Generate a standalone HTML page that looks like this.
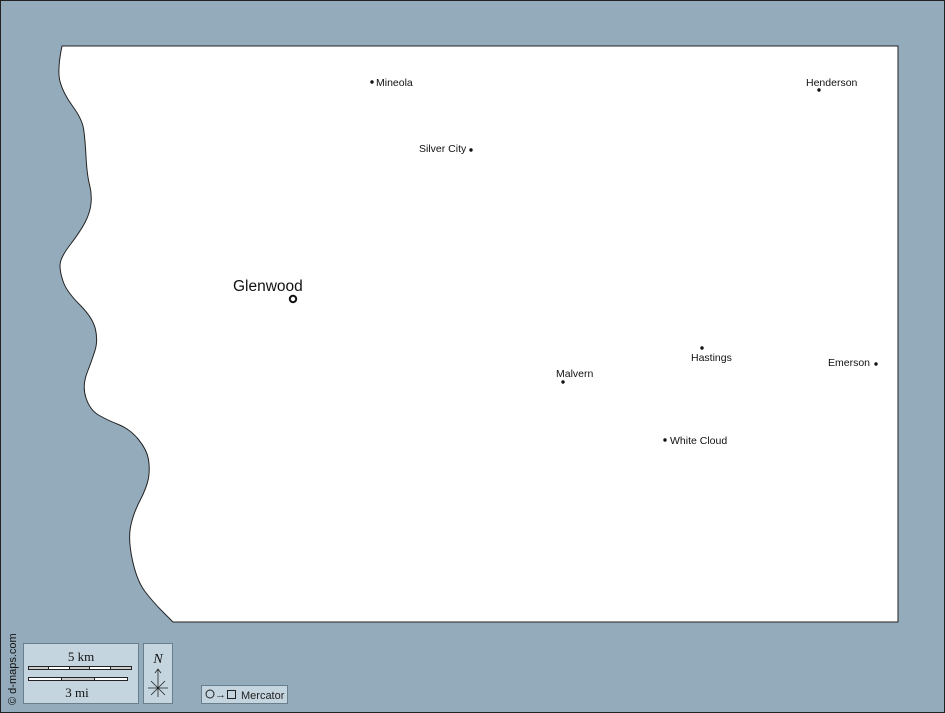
<!DOCTYPE html>
<html><head><style>
body{margin:0;width:945px;height:713px;overflow:hidden;background:#94abbb;font-family:"Liberation Sans",sans-serif}
</style></head><body>
<svg width="945" height="713" style="position:absolute;left:0;top:0">
<rect x="0.5" y="0.5" width="944" height="712" fill="#94abbb" stroke="#222"/>
<path d="M62,46 L898,46 L898,622 L173,622 L163,612 Q153,602 145,591.5 Q137,581 132.5,560.5 Q128,540 130.5,527 Q133,514 140,500.5 Q147,487 148.5,478 Q150,469 148.5,459.5 Q147,450 138.5,439.5 Q130,429 118.5,424.5 Q107,420 98.5,415 Q90,410 86,398 Q82,386 87,373 Q92,360 95,350.5 Q98,341 95.5,329.5 Q93,318 80,305 Q67,292 63.5,282.5 Q60,273 60,265.5 Q60,258 70,245 Q80,232 85,222.5 Q90,213 91,203.5 Q92,194 89.5,184.5 Q87,175 86,156.5 Q85,138 83.5,128.5 Q82,119 72.5,106 Q63,93 60,81.5 Q57,70 62,46 Z" fill="#fff" stroke="#222" stroke-width="1" stroke-linejoin="round"/>
<g font-size="10.5" fill="#111">
<circle cx="372" cy="82" r="1.7"/><text x="376" y="86">Mineola</text>
<circle cx="819" cy="90" r="1.7"/><text x="806" y="86">Henderson</text>
<circle cx="471" cy="150" r="1.7"/><text x="419" y="152">Silver City</text>
<circle cx="702" cy="348" r="1.7"/><text x="691" y="361">Hastings</text>
<circle cx="876" cy="364" r="1.7"/><text x="828" y="366">Emerson</text>
<circle cx="563" cy="382" r="1.7"/><text x="556" y="377">Malvern</text>
<circle cx="665" cy="440" r="1.7"/><text x="670" y="444">White Cloud</text>
</g>
<text x="233" y="291" font-size="15.5" fill="#111">Glenwood</text>
<circle cx="293" cy="299" r="3.2" fill="#fff" stroke="#111" stroke-width="2"/>
<text transform="translate(16,705) rotate(-90)" font-size="11" fill="#111">© d-maps.com</text>
<rect x="23.5" y="643.5" width="115" height="60" fill="#c5d5df" stroke="#6a7f8c"/>
<text x="81" y="661" font-family="Liberation Serif" font-size="13" text-anchor="middle" fill="#111">5 km</text>
<rect x="28.5" y="666.5" width="103" height="3" fill="#fff" stroke="#222"/>
<rect x="28.5" y="666.5" width="20" height="3" fill="#ccc" stroke="#222"/>
<rect x="69.5" y="666.5" width="20" height="3" fill="#ccc" stroke="#222"/>
<rect x="110.5" y="666.5" width="21" height="3" fill="#ccc" stroke="#222"/>
<rect x="28.5" y="677.5" width="99" height="3" fill="#fff" stroke="#222"/>
<rect x="61.5" y="677.5" width="33" height="3" fill="#ccc" stroke="#222"/>
<text x="77" y="697" font-family="Liberation Serif" font-size="13" text-anchor="middle" fill="#111">3 mi</text>
<rect x="143.5" y="643.5" width="29" height="60" fill="#c5d5df" stroke="#6a7f8c"/>
<text x="158" y="663" font-family="Liberation Serif" font-style="italic" font-size="14" text-anchor="middle" fill="#111">N</text>
<path d="M158,669 V697 M155,673 L158,669 L161,673 M148,688 H168 M151,681 L165,695 M165,681 L151,695" stroke="#222" fill="none" stroke-width="0.8"/>
<rect x="201.5" y="685.5" width="86" height="18" fill="#c5d5df" stroke="#6a7f8c"/>
<circle cx="210" cy="694" r="4" fill="none" stroke="#222"/>
<text x="215" y="698" font-size="11" fill="#222">→</text>
<rect x="227.5" y="690.5" width="8" height="8" fill="none" stroke="#222"/>
<text x="241" y="699" font-size="11" fill="#222">Mercator</text>
</svg>
</body></html>
